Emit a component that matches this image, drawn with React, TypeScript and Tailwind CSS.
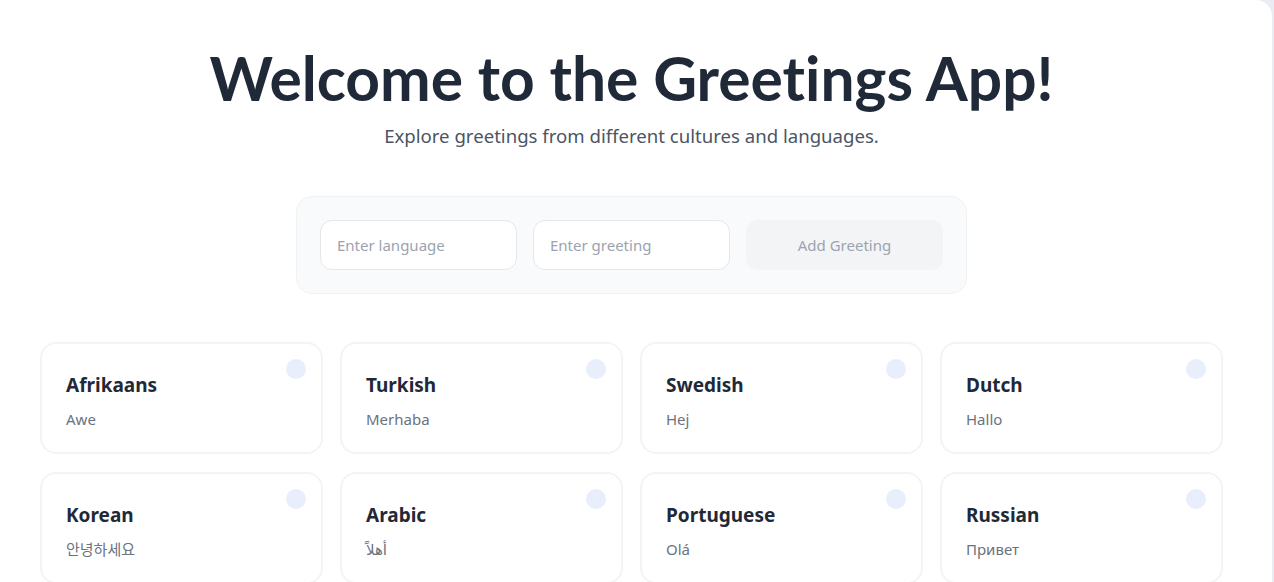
import React from "react";

const greetings = [
  { language: "Afrikaans", greeting: "Awe" },
  { language: "Turkish", greeting: "Merhaba" },
  { language: "Swedish", greeting: "Hej" },
  { language: "Dutch", greeting: "Hallo" },
  { language: "Korean", greeting: "안녕하세요" },
  { language: "Arabic", greeting: "أهلاً" },
  { language: "Portuguese", greeting: "Olá" },
  { language: "Russian", greeting: "Привет" },
];

export default function App() {
  return (
    <div
      className="min-h-[582px] w-[1274px] overflow-hidden bg-[#ebebf3]"
      style={{ fontFamily: '"Noto Sans", "Noto Sans CJK KR", "DejaVu Sans", sans-serif' }}
    >
      <div className="w-[1272px] min-h-[600px] rounded-tr-2xl bg-white pl-10 pt-[42px]">
        <div className="w-[1183px]">
          <h1
            className="text-center text-[60.5px] font-bold leading-[72px] text-[#1f2937] [font-variant-ligatures:none]"
            style={{ fontFamily: 'Lato, "Noto Sans", sans-serif' }}
          >
            Welcome to the Greetings App!
          </h1>
          <p className="mt-2 text-center text-[18.6px] leading-7 text-[#4b5563]">
            Explore greetings from different cultures and languages.
          </p>

          <div className="mt-[46px] flex justify-center">
            <div className="flex gap-4 rounded-2xl border border-[#f0f1f3] bg-[#f9fafb] p-[23px]">
              <input
                className="h-[50px] w-[197px] rounded-xl border border-[#e5e7eb] bg-white px-4 text-[15px] text-[#374151] outline-none placeholder:text-[#9ca3af]"
                placeholder="Enter language"
              />
              <input
                className="h-[50px] w-[197px] rounded-xl border border-[#e5e7eb] bg-white px-4 text-[15px] text-[#374151] outline-none placeholder:text-[#9ca3af]"
                placeholder="Enter greeting"
              />
              <button className="h-[50px] w-[197px] rounded-xl bg-[#f3f4f6] text-[15px] text-[#9ca3af]">
                Add Greeting
              </button>
            </div>
          </div>

          <div className="mt-[48px] grid grid-cols-4 gap-x-[17px] gap-y-[18px]">
            {greetings.map((g) => (
              <div
                key={g.language}
                className="relative h-[112px] rounded-2xl border-2 border-[#f3f4f6] bg-white px-6 pt-[27px]"
              >
                <div className="absolute right-[15px] top-[15px] h-5 w-5 rounded-full bg-[#e8eefc]" />
                <div className="text-[19px] font-bold leading-7 text-[#1f2937]">{g.language}</div>
                <div className="mt-[8px] text-[15px] leading-6 text-[#6b7280]">{g.greeting}</div>
              </div>
            ))}
          </div>
        </div>
      </div>
    </div>
  );
}
